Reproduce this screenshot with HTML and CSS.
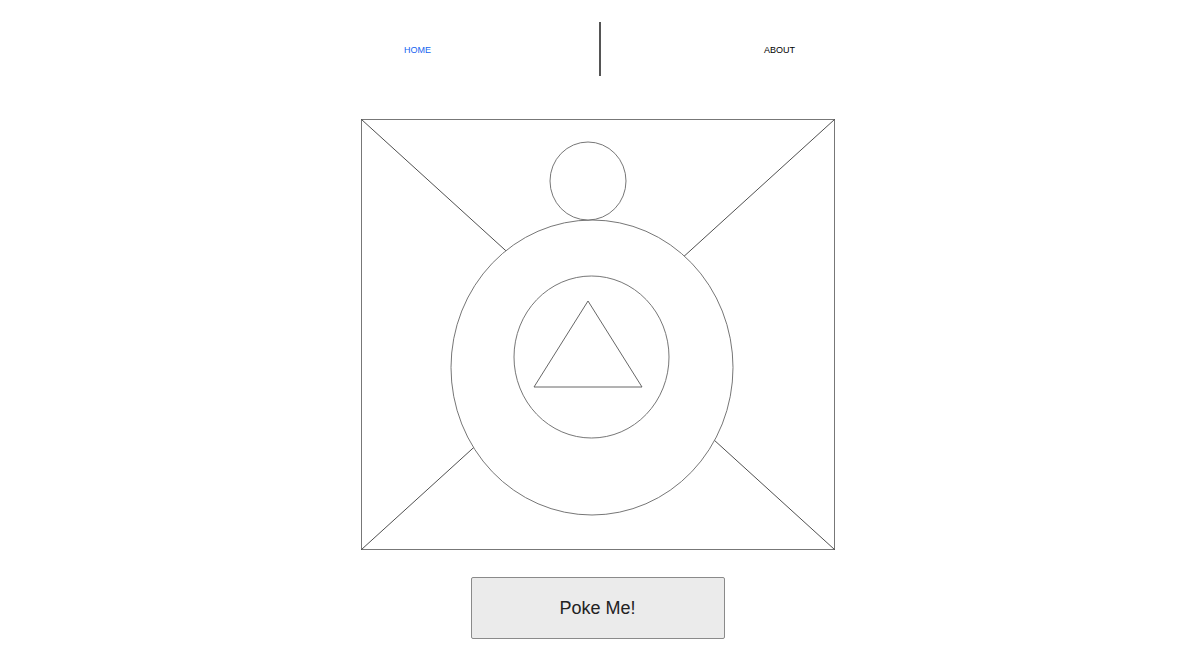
FILE: index.html
```html
<!DOCTYPE html>
<html lang="en">
<head>
    <meta charset="UTF-8">
    <meta name="viewport" content="width=device-width, initial-scale=1.0">
    <title>Poke</title>
    <link rel="stylesheet" href="styles.css">
</head>
<body>
    <div class="page">
        <nav class="nav">
            <a class="nav-item home active" href="#">HOME</a>
            <span class="divider"></span>
            <a class="nav-item about" href="#">ABOUT</a>
        </nav>
        <div class="picture">
            <svg width="474" height="431" viewBox="0 0 474 431">
                <rect x="0.5" y="0.5" width="473" height="430" fill="#fff" stroke="#777" stroke-width="1"/>
                <line x1="0.5" y1="0.5" x2="473.5" y2="430.5" stroke="#222" stroke-width="0.8"/>
                <line x1="473.5" y1="0.5" x2="0.5" y2="430.5" stroke="#222" stroke-width="0.8"/>
                <ellipse cx="231" cy="248.5" rx="141" ry="147.5" fill="#fff" stroke="#666" stroke-width="0.9"/>
                <ellipse cx="227" cy="62" rx="38" ry="39" fill="#fff" stroke="#666" stroke-width="0.9"/>
                <ellipse cx="230.5" cy="238" rx="77.5" ry="81" fill="#fff" stroke="#666" stroke-width="0.9"/>
                <polygon points="227,182 173,268 281,268" fill="none" stroke="#555" stroke-width="0.9"/>
            </svg>
        </div>
        <button class="poke">Poke Me!</button>
    </div>
</body>
</html>
```

FILE: styles.css
```css
*{
    margin: 0px;
    padding: 0px;
    box-sizing: border-box;
}
body{
    padding: 8px 0 8px 8px;
    font-family: "Liberation Sans", Arial, sans-serif;
    background: #fff;
}
.page{
    display: flex;
    flex-direction: column;
    align-items: center;
}
.nav{
    display: flex;
    align-items: center;
    width: 722px;
    margin-top: 14px;
}
.nav-item{
    text-align: center;
    font-size: 9px;
    color: #000;
    text-decoration: none;
    line-height: 56px;
    height: 54px;
}
.nav-item.home{
    width: 362px;
}
.nav-item.about{
    width: 358px;
}
.nav-item.active{
    color: #1565f0;
}
.divider{
    width: 2px;
    height: 54px;
    background-color: #555;
}
.picture{
    margin-top: 43px;
    line-height: 0;
}
.poke{
    margin-top: 27px;
    width: 254px;
    height: 62px;
    background-color: #ebebeb;
    border: 1px solid #8a8a8a;
    border-radius: 2px;
    font-family: "Liberation Sans", Arial, sans-serif;
    font-size: 18px;
    color: #222;
    cursor: pointer;
}
```
